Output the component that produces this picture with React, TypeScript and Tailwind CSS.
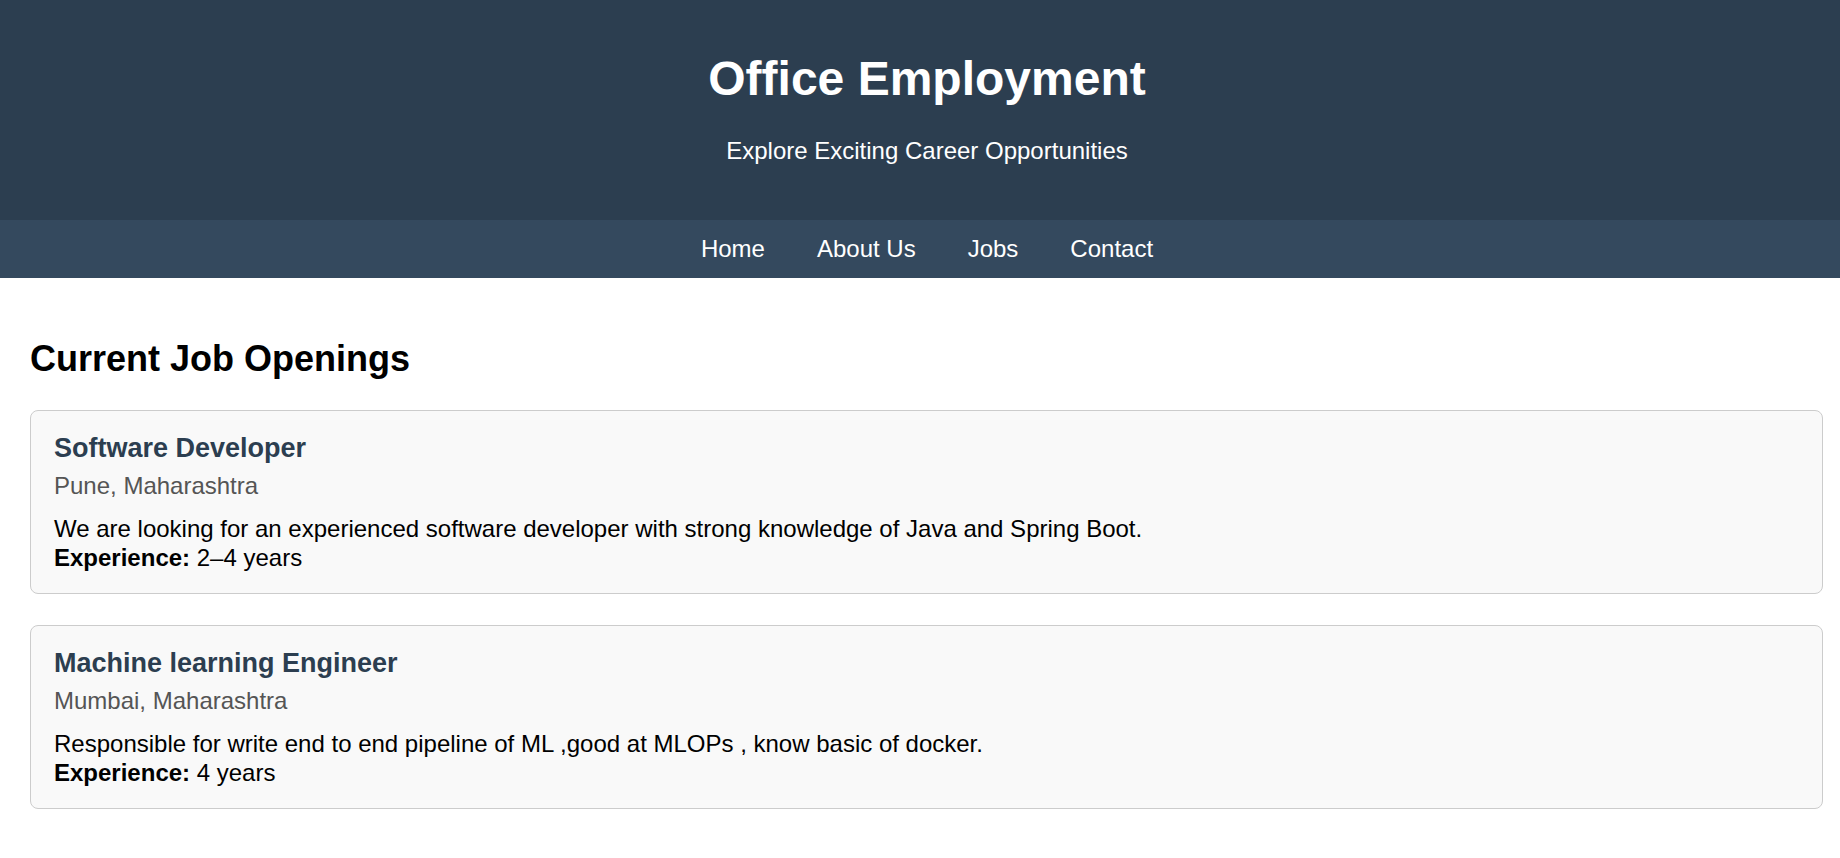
const jobs = [
  {
    title: 'Software Developer',
    location: 'Pune, Maharashtra',
    description:
      'We are looking for an experienced software developer with strong knowledge of Java and Spring Boot.',
    experience: '2–4 years',
  },
  {
    title: 'Machine learning Engineer',
    location: 'Mumbai, Maharashtra',
    description:
      'Responsible for write end to end pipeline of ML ,good at MLOPs , know basic of docker.',
    experience: '4 years',
  },
]

const links = ['Home', 'About Us', 'Jobs', 'Contact']

type Job = (typeof jobs)[number]

function JobCard({job}: {job: Job}) {
  return (
    <div className="rounded-[8px] border border-[#cccccc] bg-[#f9f9f9] px-[23px] pb-[21.5px] pt-[22px]">
      <h3 className="text-[27px] font-bold leading-[31px] text-[#2c3e50]">{job.title}</h3>
      <p className="mt-[7.5px] text-[24px] leading-[28px] text-[#555555]">{job.location}</p>
      <p className="mt-[14px] text-[24px] leading-[29px] text-black">{job.description}</p>
      <p className="text-[24px] leading-[29px] text-black">
        <strong className="font-bold">Experience:</strong> {job.experience}
      </p>
    </div>
  )
}

export default function App() {
  return (
    <div className="min-h-[858px] w-[1840px] overflow-hidden bg-white font-['Liberation_Sans',Arial,sans-serif]">
      <div className="w-[1854px]">
        <header className="h-[220px] bg-[#2c3e50] pt-[51px] text-center text-white">
          <h1 className="text-[48px] font-bold leading-[55px]">Office Employment</h1>
          <p className="mt-[31px] text-[24px] leading-[28px]">Explore Exciting Career Opportunities</p>
        </header>

        <nav className="flex h-[58px] items-center justify-center gap-[52px] bg-[#34495e] text-[24px] leading-[28px] text-white">
          {links.map((l) => (
            <a key={l} href="#">
              {l}
            </a>
          ))}
        </nav>

        <main className="pl-[30px] pr-[31px] pt-[60px]">
          <h2 className="text-[36px] font-bold leading-[41px] text-black">Current Job Openings</h2>
          <div className="mt-[31px] flex flex-col gap-[31px]">
            {jobs.map((job) => (
              <JobCard key={job.title} job={job} />
            ))}
          </div>
        </main>
      </div>
    </div>
  )
}
